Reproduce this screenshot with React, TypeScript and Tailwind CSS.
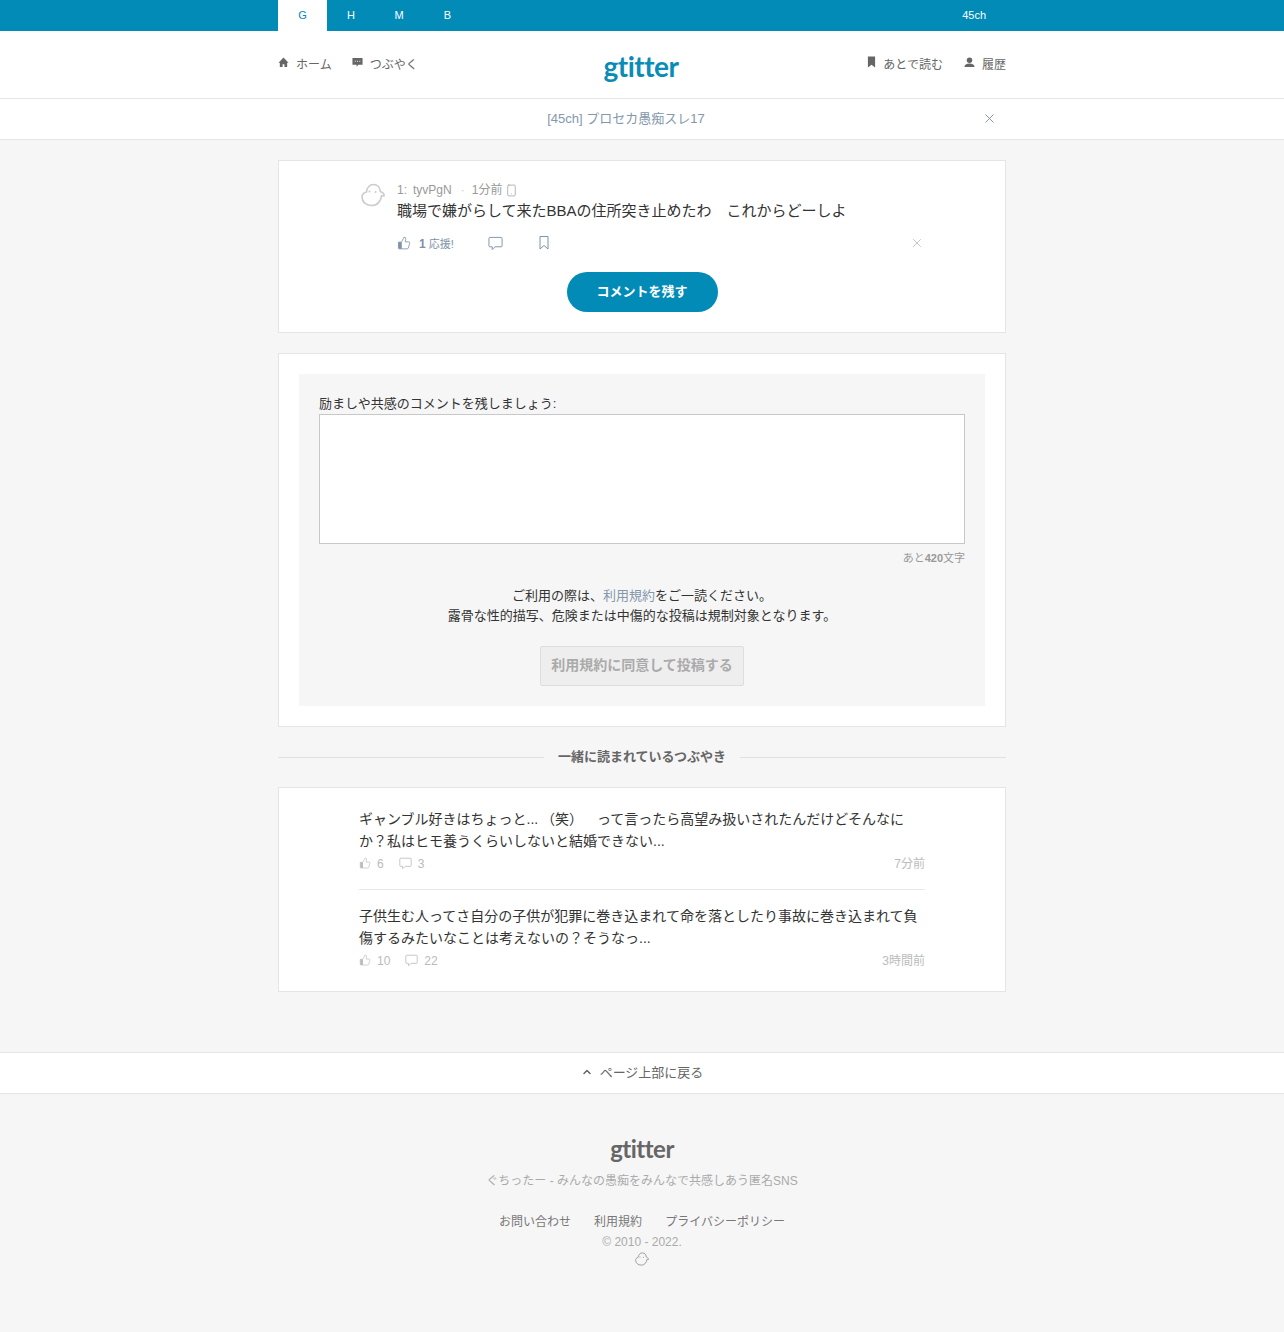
import { ChevronUp, Smartphone, X } from 'lucide-react';

const font = { fontFamily: '"Liberation Sans", "Noto Sans CJK JP", sans-serif' };

function Chick({ className }: { className: string }) {
  return (
    <svg viewBox="0 0 24 24" className={className} fill="none" stroke="currentColor" strokeWidth="1.6">
      <path d="M5.500 9C6 4.500 8.800 1.500 12.500 1.500c4 0 6.500 3 6.800 7 2 .8 3.900 2.300 3.900 4.200-1 .3-1.800.3-2.700.1-.5 5.200-4.200 9.700-9.500 9.700-5.500 0-9.800-3.300-9.800-7.800C.7 11.500 2.800 9.600 5.500 9Z" />
      <circle cx="8.500" cy="8.500" r="1" fill="currentColor" stroke="none" />
      <circle cx="14.500" cy="9" r="1" fill="currentColor" stroke="none" />
    </svg>
  );
}

function CommentIcon({ className }: { className: string }) {
  return (
    <svg viewBox="0 0 16 16" className={className} fill="none" stroke="currentColor" strokeWidth="1">
      <path d="M2 1.500h12a1 1 0 0 1 1 1v8a1 1 0 0 1-1 1H7.500L4.500 14.500v-3H2a1 1 0 0 1-1-1v-8a1 1 0 0 1 1-1Z" />
    </svg>
  );
}

function ThumbIcon({ className, strokeWidth }: { className: string; strokeWidth: number }) {
  return (
    <svg viewBox="0 0 24 24" className={className} fill="none" stroke="currentColor" strokeWidth={strokeWidth} strokeLinejoin="round">
      <path d="M2.500 10.500H7V22H4a1.500 1.500 0 0 1-1.500-1.500Z" fill="currentColor" />
      <path d="M15 5.880 14 10h5.830a2 2 0 0 1 1.920 2.560l-2.330 8A2 2 0 0 1 17.500 22H7V10.500l1.550-1.610L12 2a3.130 3.130 0 0 1 3 3.880Z" />
    </svg>
  );
}

function NavLink({ icon, label }: { icon: React.ReactNode; label: string }) {
  return (
    <a className="flex items-center gap-[7px] text-[12px] text-[#666]">
      <span className="-translate-y-[3px]">{icon}</span>
      <span>{label}</span>
    </a>
  );
}

function Related({ text, likes, comments, time, last }: { text: string; likes: number; comments: number; time: string; last?: boolean }) {
  return (
    <div className={last ? 'pt-[15px]' : 'pb-[16px] border-b border-[#e8e8e8]'}>
      <p className="text-[14px] leading-[22px] text-[#333]">{text}</p>
      <div className="mt-[3px] flex items-center justify-between text-[12px] text-[#bbb]">
        <div className="flex items-center">
          <ThumbIcon strokeWidth={1.3} className="h-[12px] w-[12px] -translate-y-[1px]" />
          <span className="ml-[6px]">{likes}</span>
          <CommentIcon className="ml-[15px] h-[13px] w-[13px] -translate-y-[1px]" />
          <span className="ml-[6px]">{comments}</span>
        </div>
        <span>{time}</span>
      </div>
    </div>
  );
}

export default function App() {
  return (
    <div style={font} className="min-h-[1332px] bg-[#f6f6f6] [text-spacing-trim:space-all]">
      <div className="h-[31px] bg-[#028bb7]">
        <div className="mx-auto flex h-full w-[728px] items-center text-[11px] text-white">
          <a className="flex h-full w-[49px] items-center justify-center bg-white text-[#028bb7]">G</a>
          <a className="w-[48px] text-center">H</a>
          <a className="w-[48px] text-center">M</a>
          <a className="w-[49px] text-center">B</a>
          <a className="ml-auto mr-[20px]">45ch</a>
        </div>
      </div>

      <header className="h-[68px] border-b border-[#e5e5e5] bg-white">
        <div className="mx-auto flex h-full w-[728px] items-start justify-between pt-[25px]">
          <div className="flex w-[220px] gap-[20px]">
            <NavLink
              label="ホーム"
              icon={
                <svg viewBox="0 0 12 12" className="h-[11px] w-[11px] fill-[#666]">
                  <path d="M6 .5 .5 6.200H2V11h3V7.800h2V11h3V6.200h1.500Z" />
                </svg>
              }
            />
            <NavLink
              label="つぶやく"
              icon={
                <svg viewBox="0 0 12 12" className="h-[11px] w-[11px] fill-[#666]">
                  <path d="M.5 1h11v7.500H7L5 10.500v-2H.5Z" />
                  <path d="M3 4.200h1v1H3ZM5.500 4.200h1v1h-1ZM8 4.200h1v1H8Z" fill="#fff" />
                </svg>
              }
            />
          </div>
          <a className="-ml-[2px] -mt-[9px] text-[28px] font-bold leading-[38px] tracking-[-0.5px] text-[#0a8db5]" style={{ fontFamily: 'Lato, sans-serif' }}>
            gtitter
          </a>
          <div className="flex w-[220px] justify-end gap-[21px]">
            <NavLink
              label="あとで読む"
              icon={
                <svg viewBox="0 0 10 12" className="h-[12px] w-[9px] fill-[#666]">
                  <path d="M1 0h8v12L5 9l-4 3Z" />
                </svg>
              }
            />
            <NavLink
              label="履歴"
              icon={
                <svg viewBox="0 0 12 12" className="h-[11px] w-[11px] fill-[#666]">
                  <circle cx="6" cy="3.500" r="3" />
                  <path d="M.5 11c0-2.500 2.200-3.800 5.500-3.800s5.500 1.300 5.500 3.800Z" />
                </svg>
              }
            />
          </div>
        </div>
      </header>

      <div className="h-[41px] border-b border-[#e5e5e5] bg-white">
        <div className="relative mx-auto flex h-full w-[728px] items-center justify-center">
          <a className="-ml-[32px] text-[13px] text-[#8497ab]">[45ch] プロセカ愚痴スレ17</a>
          <X size={15} strokeWidth={1.5} className="absolute right-[9px] top-[12px] text-[#7d92a8]" />
        </div>
      </div>

      <main className="mx-auto mt-[20px] w-[728px]">
        <section className="h-[173px] border border-[#e5e5e5] bg-white pl-[82px] pr-[82px] pt-[20px]">
          <div className="flex">
            <Chick className="mt-[2px] h-[24px] w-[24px] shrink-0 text-[#ccc]" />
            <div className="ml-[12px] min-w-0 flex-1">
              <div className="flex items-center text-[12px] leading-[18px] text-[#999]">
                <span>1:</span>
                <span className="ml-[6px]">tyvPgN</span>
                <span className="ml-[9px] text-[#ccc]">·</span>
                <span className="ml-[7px]">1分前</span>
                <Smartphone size={13} strokeWidth={1.3} className="ml-[3px] text-[#999]" />
              </div>
              <p className="text-[15px] leading-[23px] text-[#333]">職場で嫌がらして来たBBAの住所突き止めたわ　これからどーしよ</p>
              <div className="mt-[13px] flex items-center text-[#7d92a8]">
                <ThumbIcon strokeWidth={1.4} className="h-[14px] w-[14px] -translate-y-[1px]" />
                <span className="ml-[8px] text-[12px] font-bold">1</span>
                <span className="ml-[3px] text-[11px]">応援!</span>
                <CommentIcon className="ml-[34px] h-[15px] w-[15px] -translate-y-[1px]" />
                <svg viewBox="0 0 10 14" className="ml-[36px] h-[14px] w-[10px] -translate-y-[1px]" fill="none" stroke="currentColor" strokeWidth="1">
                  <path d="M1 .5h8v12.500L5 9.500 1 13Z" />
                </svg>
                <X size={14} strokeWidth={1.3} className="ml-auto -mr-[1px] -translate-y-[1px] text-[#aab4bf]" />
              </div>
            </div>
          </div>
          <div className="mt-[19px] flex justify-center">
            <button className="h-[40px] w-[151px] rounded-full bg-[#028bb7] text-[13px] font-bold text-white">コメントを残す</button>
          </div>
        </section>

        <section className="mt-[20px] border border-[#e5e5e5] bg-white p-[20px]">
          <div className="h-[332px] bg-[#f6f6f6] px-[20px] pt-[20px]">
            <label className="block text-[13px] leading-[20px] text-[#333]">励ましや共感のコメントを残しましょう:</label>
            <div className="h-[130px] border border-[#c8c8c8] bg-white" />
            <div className="mt-[6px] text-right text-[11px] leading-[16px] text-[#999]">
              あと<b>420</b>文字
            </div>
            <p className="mt-[20px] text-center text-[13px] leading-[20px] text-[#333]">
              ご利用の際は、<a className="text-[#8497ab]">利用規約</a>をご一読ください。
              <br />
              露骨な性的描写、危険または中傷的な投稿は規制対象となります。
            </p>
            <div className="mt-[20px] flex justify-center">
              <button className="h-[40px] w-[204px] rounded-[2px] border border-[#ddd] bg-[#eee] pb-[2px] text-[14px] font-bold text-[#aaa]">利用規約に同意して投稿する</button>
            </div>
          </div>
        </section>

        <div className="mt-[20px] flex h-[20px] items-center">
          <div className="h-px flex-1 bg-[#e0e0e0]" />
          <h2 className="px-[14px] text-[13px] font-bold text-[#666]">一緒に読まれているつぶやき</h2>
          <div className="h-px flex-1 bg-[#e0e0e0]" />
        </div>

        <section className="mt-[20px] h-[205px] border border-[#e5e5e5] bg-white px-[80px] pt-[20px]">
          <Related
            text={'ギャンブル好きはちょっと...\u2009（笑）　って言ったら高望み扱いされたんだけどそんなにか？私はヒモ養うくらいしないと結婚できない...'}
            likes={6}
            comments={3}
            time="7分前"
          />
          <Related
            text="子供生む人ってさ自分の子供が犯罪に巻き込まれて命を落としたり事故に巻き込まれて負傷するみたいなことは考えないの？そうなっ..."
            likes={10}
            comments={22}
            time="3時間前"
            last
          />
        </section>
      </main>

      <a className="mt-[60px] flex h-[42px] items-center justify-center border-y border-[#e5e5e5] bg-white text-[13px] text-[#666]">
        <ChevronUp size={12} strokeWidth={3} className="mr-[7px] -translate-y-[1px]" />
        ページ上部に戻る
      </a>

      <footer className="flex flex-col items-center pt-[38px] text-[12px]">
        <a className="text-[24px] font-bold leading-[34px] tracking-[-0.5px] text-[#666]" style={{ fontFamily: 'Lato, sans-serif' }}>
          gtitter
        </a>
        <p className="mt-[6px] text-[#aaa]">ぐちったー - みんなの愚痴をみんなで共感しあう匿名SNS</p>
        <nav className="mt-[23px] flex gap-[23px] text-[#777]">
          <a>お問い合わせ</a>
          <a>利用規約</a>
          <a>プライバシーポリシー</a>
        </nav>
        <p className="mt-[2px] text-[#aaa]">© 2010 - 2022.</p>
        <Chick className="mt-[1px] h-[14px] w-[14px] text-[#999]" />
      </footer>
    </div>
  );
}
